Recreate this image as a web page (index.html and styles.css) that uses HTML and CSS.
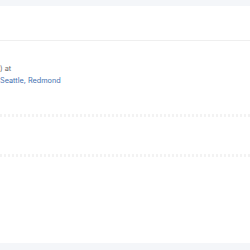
FILE: index.html
```html
<!DOCTYPE html>
<html lang="en">

<head>
    <meta charset="UTF-8">
    <meta name="viewport" content="width=device-width, initial-scale=1.0">
    <title>Location</title>
    <link rel="stylesheet" href="styles.css">
</head>

<body>
    <div class="page">
        <div class="card">
            <div class="cardHeader"></div>
            <div class="cardBody">
                <p class="meta">) at</p>
                <p class="places">Seattle, Redmond</p>
            </div>
            <div class="fadedRow"></div>
            <div class="fadedRow second"></div>
        </div>
    </div>
</body>

</html>
```

FILE: styles.css
```css
body {
    margin: 0;
    background-color: #f4f6f9;
    font-family: Inter, "Noto Sans", sans-serif;
}

.page {
    padding: 6px 0 7px;
}

.card {
    background-color: white;
    height: 237px;
}

.cardHeader {
    height: 34px;
    border-bottom: 1px solid #efefef;
}

.cardBody {
    padding: 22px 0 0;
}

.meta,
.places {
    margin: 0;
    font-size: 7.3px;
    line-height: 12px;
}

.meta {
    color: #6b6b6b;
}

.places {
    color: #4571b0;
}

.fadedRow {
    margin-top: 27px;
    height: 3px;
    background-image: repeating-linear-gradient(90deg, #f3f3f3 0 2px, transparent 2px 4px);
}

.fadedRow.second {
    margin-top: 37px;
}
```
